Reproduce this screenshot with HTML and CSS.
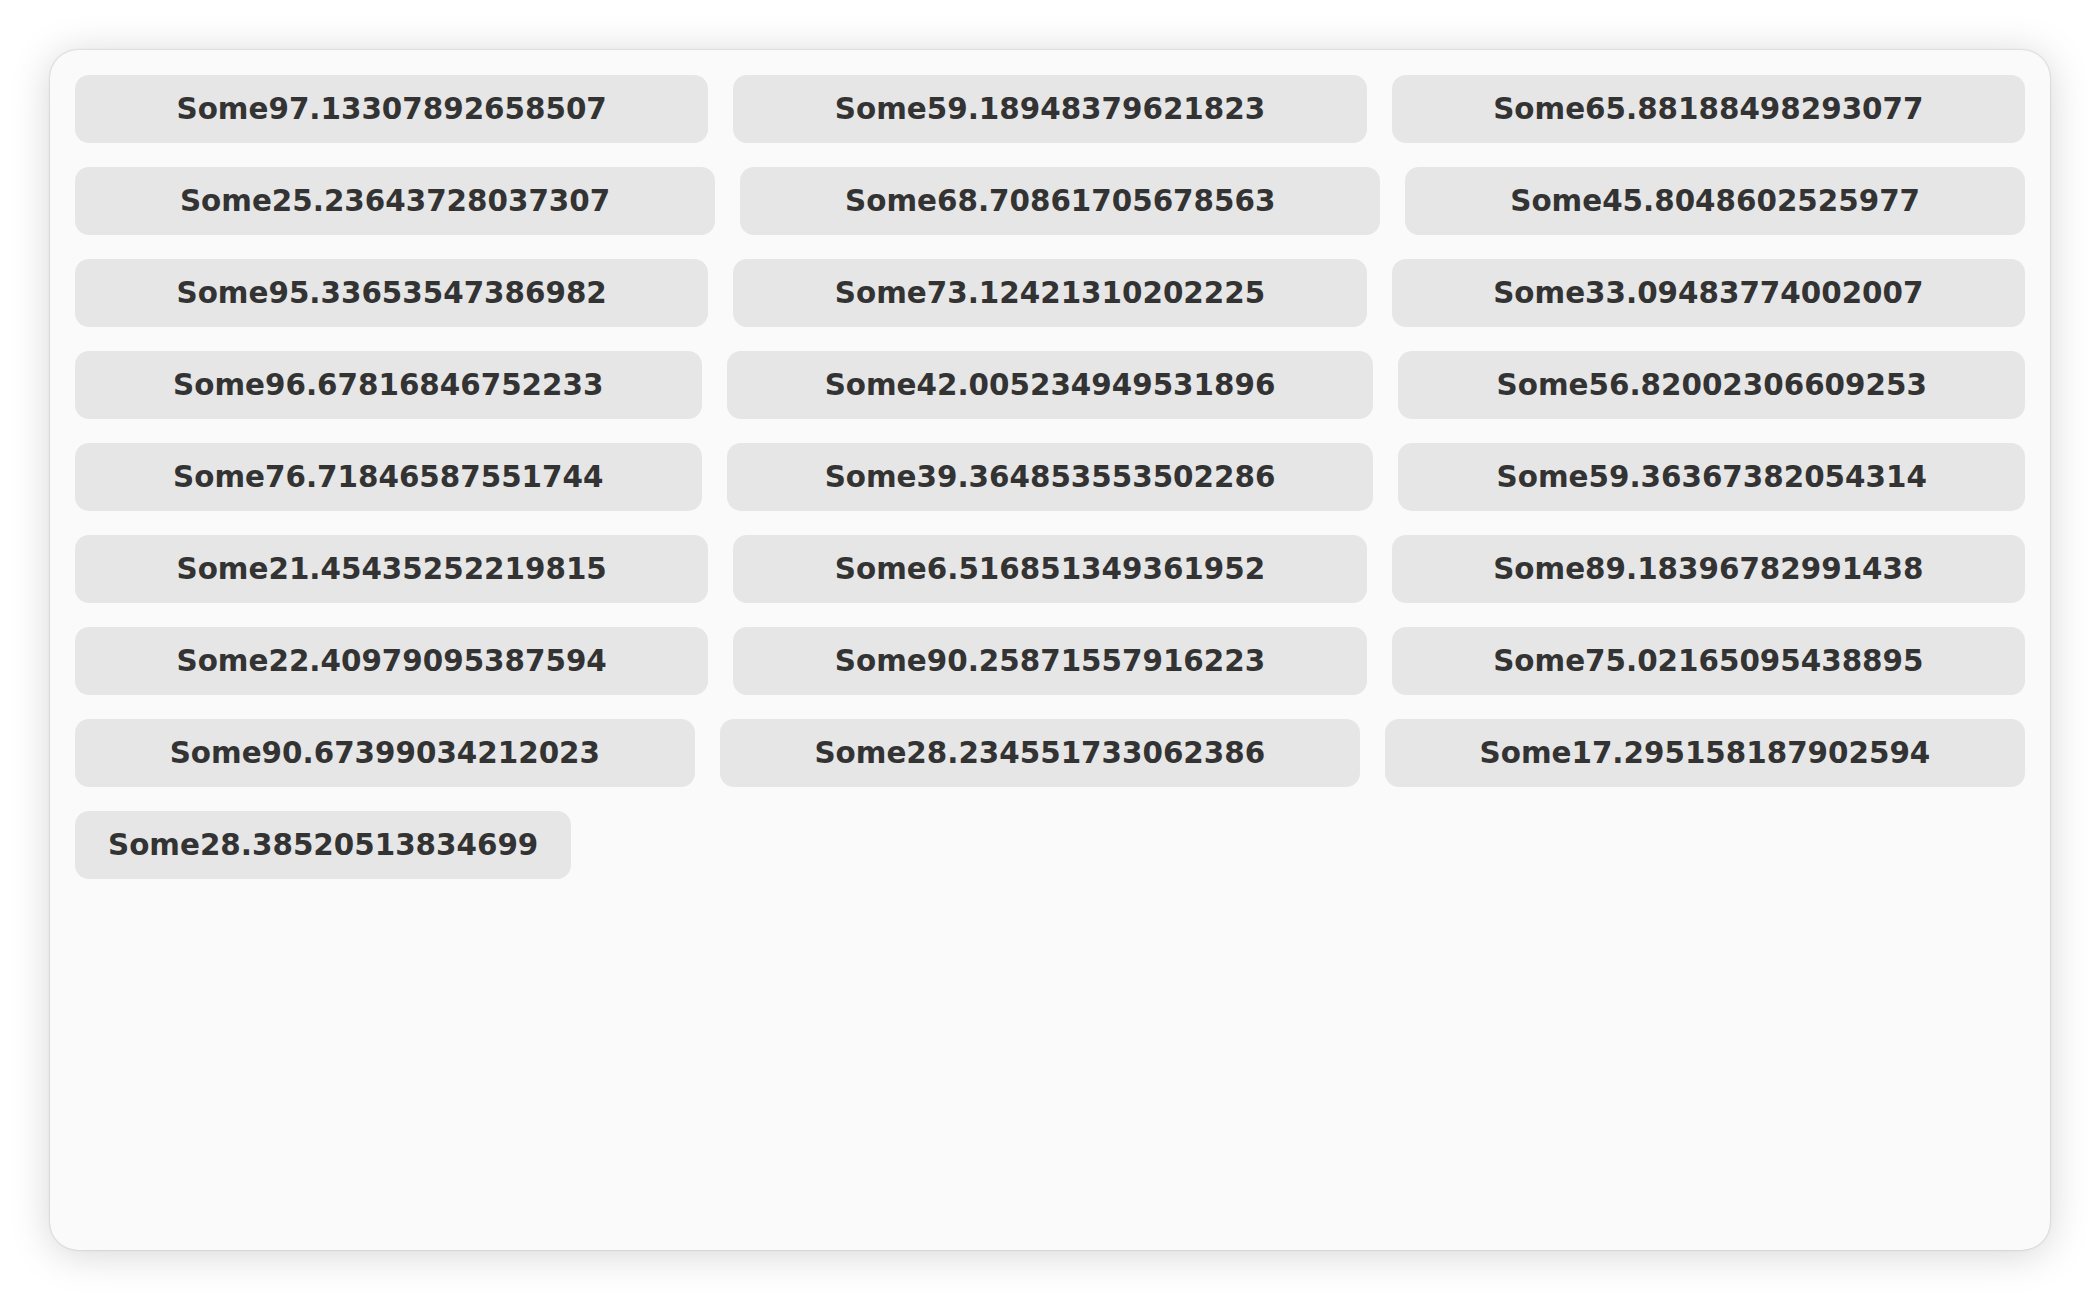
FILE: index.html
```html
<!DOCTYPE html>
<html lang="en">

<head>
    <meta charset="UTF-8">
    <meta name="viewport" content="width=device-width, initial-scale=1.0">
    <title>Chips</title>
    <link rel="stylesheet" href="styles.css">
</head>

<body>
    <div class="panel">
        <div class="chip-list">
            <div class="chip">Some97.13307892658507</div>
            <div class="chip">Some59.18948379621823</div>
            <div class="chip">Some65.88188498293077</div>
            <div class="chip">Some25.23643728037307</div>
            <div class="chip">Some68.70861705678563</div>
            <div class="chip">Some45.8048602525977</div>
            <div class="chip">Some95.33653547386982</div>
            <div class="chip">Some73.12421310202225</div>
            <div class="chip">Some33.09483774002007</div>
            <div class="chip">Some96.67816846752233</div>
            <div class="chip">Some42.005234949531896</div>
            <div class="chip">Some56.82002306609253</div>
            <div class="chip">Some76.71846587551744</div>
            <div class="chip">Some39.364853553502286</div>
            <div class="chip">Some59.36367382054314</div>
            <div class="chip">Some21.45435252219815</div>
            <div class="chip">Some6.516851349361952</div>
            <div class="chip">Some89.18396782991438</div>
            <div class="chip">Some22.40979095387594</div>
            <div class="chip">Some90.25871557916223</div>
            <div class="chip">Some75.02165095438895</div>
            <div class="chip">Some90.67399034212023</div>
            <div class="chip">Some28.234551733062386</div>
            <div class="chip">Some17.295158187902594</div>
            <div class="chip">Some28.38520513834699</div>
        </div>
    </div>
</body>

</html>
```

FILE: styles.css
```css
body {
    margin: 0;
    padding: 50px;
    background-color: #ffffff;
    font-family: "DejaVu Sans", sans-serif;
    color: #333;
    box-sizing: border-box;
}

.panel {
    height: 1200px;
    background-color: #fafafa;
    border-radius: 28px;
    box-shadow: 0 0 2px rgba(0, 0, 0, 0.25), 0 4px 40px rgba(0, 0, 0, 0.17);
    padding: 25px;
    box-sizing: border-box;
}

.chip-list {
    display: flex;
    flex-wrap: wrap;
    gap: 24px 25px;
}

/* keeps the last row from stretching */
.chip-list::after {
    content: "";
    flex: 100000 1 0;
}

.chip {
    flex: 1 1 auto;
    background-color: #e6e6e6;
    border-radius: 14px;
    padding: 17px 33px;
    font-size: 29.4px;
    font-weight: bold;
    text-align: center;
    white-space: nowrap;
}
```
